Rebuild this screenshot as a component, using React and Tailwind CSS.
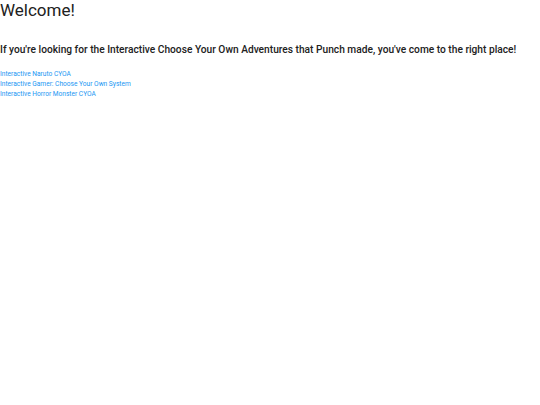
export default function App() {
  const links = [
    'Interactive Naruto CYOA',
    'Interactive Gamer: Choose Your Own System',
    'Interactive Horror Monster CYOA',
  ];

  return (
    <div className="min-h-screen bg-white font-['Roboto',sans-serif] text-[#212121]">
      <h1 className="text-[17px] leading-[20px] font-normal">Welcome!</h1>
      <h3 className="mt-[23px] text-[10.2px] leading-[13px] font-medium">
        If you're looking for the Interactive Choose Your Own Adventures that Punch made, you've come to the right place!
      </h3>
      <div className="mt-[13px] flex flex-col items-start">
        {links.map((l) => (
          <a key={l} href="#" className="text-[6.6px] leading-[10px] text-[#2196f3]">
            {l}
          </a>
        ))}
      </div>
    </div>
  );
}
